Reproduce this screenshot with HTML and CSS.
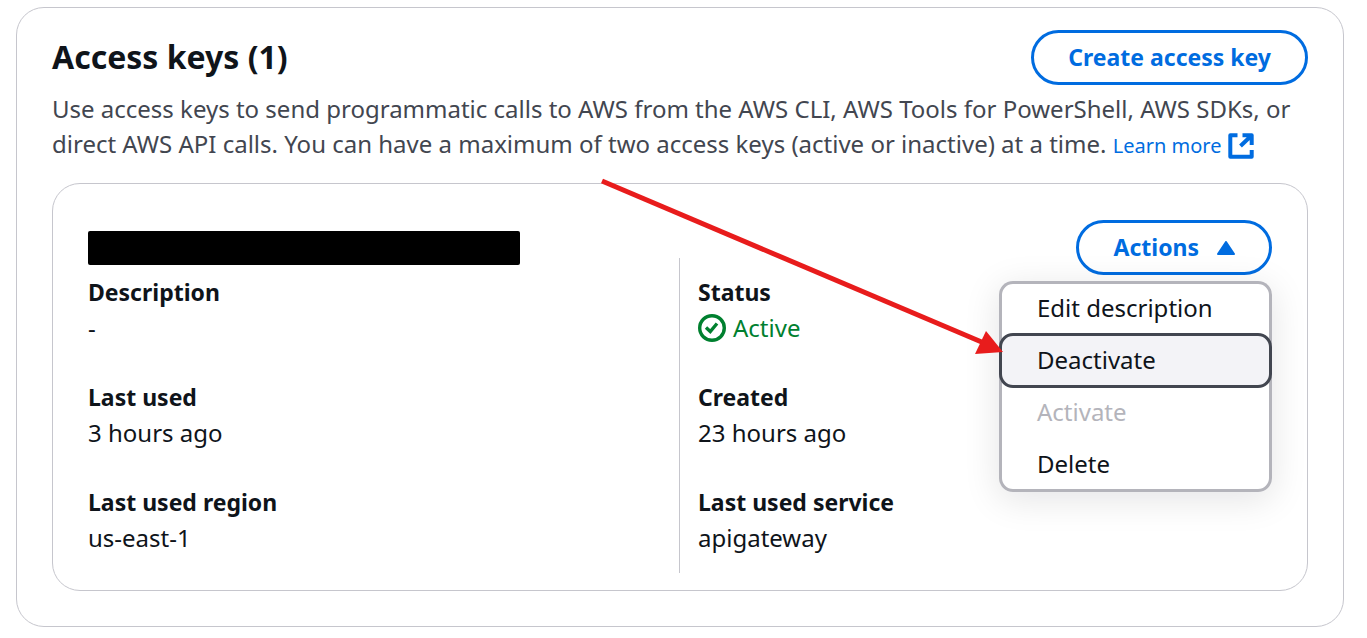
FILE: index.html
```html
<!DOCTYPE html>
<html lang="en">
<head>
<meta charset="utf-8">
<meta name="viewport" content="width=device-width, initial-scale=1">
<title>Access keys</title>
<link rel="stylesheet" href="styles.css">
</head>
<body>
<main class="panel">
  <header class="panel-header">
    <h2 class="panel-title">Access keys (1)</h2>
    <button class="button" type="button">Create access key</button>
  </header>
  <p class="panel-description">Use access keys to send programmatic calls to AWS from the AWS CLI, AWS Tools for PowerShell, AWS SDKs, or direct AWS API calls. You can have a maximum of two access keys (active or inactive) at a time. <a class="learn-more" href="#">Learn more<svg class="external-icon" viewBox="0 0 26 26" aria-hidden="true"><path d="M9.500 2.300H2.300V23.700H23.700V17M14.500 2.300H23.700V12M23 3L12.500 13" fill="none" stroke="currentColor" stroke-width="4" stroke-linejoin="round"/></svg></a></p>

  <section class="key-card">
    <div class="key-header">
      <div class="redacted"></div>
      <div class="actions">
        <button class="button" type="button" aria-haspopup="menu" aria-expanded="true">Actions <svg class="caret" viewBox="0 0 18 14" aria-hidden="true"><path d="M9 1L17 13H1Z" fill="currentColor" stroke="currentColor" stroke-width="2" stroke-linejoin="round"/></svg></button>
        <div class="menu" role="menu">
          <button class="menu-item" type="button" role="menuitem">Edit description</button>
          <button class="menu-item menu-item-active" type="button" role="menuitem">Deactivate</button>
          <button class="menu-item" type="button" role="menuitem" disabled>Activate</button>
          <button class="menu-item" type="button" role="menuitem">Delete</button>
        </div>
        <svg class="arrow" viewBox="0 0 404 180" aria-hidden="true"><path d="M2 3L384 165" stroke="#e81c1c" stroke-width="5"/><path d="M386 153L403 174L375 176Z" fill="#e81c1c"/></svg>
      </div>
    </div>
    <div class="columns">
      <dl class="column">
        <div><dt>Description</dt><dd>-</dd></div>
        <div><dt>Last used</dt><dd>3 hours ago</dd></div>
        <div><dt>Last used region</dt><dd>us-east-1</dd></div>
      </dl>
      <dl class="column">
        <div><dt>Status</dt><dd class="status"><svg class="status-icon" viewBox="0 0 28 28" aria-hidden="true"><circle cx="14" cy="14" r="12.300" fill="none" stroke="currentColor" stroke-width="3.400"/><path d="M8 13.500L12.300 17.500L19 9.500" fill="none" stroke="currentColor" stroke-width="3.400"/></svg>Active</dd></div>
        <div><dt>Created</dt><dd>23 hours ago</dd></div>
        <div><dt>Last used service</dt><dd>apigateway</dd></div>
      </dl>
    </div>
  </section>
</main>
</body>
</html>
```
FILE: styles.css
```css
* {
  box-sizing: border-box;
}

body {
  margin: 7px 23px 11px 16px;
  background: #fff;
  color: #0f141a;
  font-family: "Noto Sans", "Open Sans", sans-serif;
  font-size: 24px;
  line-height: 35px;
}

.panel {
  padding: 22px 35px 35px;
  border: 1px solid #c6c6cd;
  border-radius: 28px;
}

.panel-header {
  display: flex;
  align-items: center;
  justify-content: space-between;
}

.panel-title {
  margin: 0;
  padding-bottom: 2px;
  font-size: 32px;
  line-height: 42px;
}

.button {
  display: flex;
  align-items: center;
  justify-content: center;
  gap: 18px;
  padding: 7px 34px;
  border: 3px solid #006ce0;
  border-radius: 28px;
  background: #fff;
  color: #006ce0;
  font: inherit;
  font-size: 23px;
  font-weight: 700;
}

.panel-description {
  margin: 6px 0 22px;
  color: #424650;
}

.learn-more {
  color: #006ce0;
  font-size: 20px;
  line-height: 24px;
  text-decoration: none;
  white-space: nowrap;
}

.external-icon {
  width: 26px;
  height: 26px;
  margin-left: 7px;
  vertical-align: -6px;
}

.key-card {
  padding: 36px 35px 17px;
  border: 1px solid #c6c6cd;
  border-radius: 28px;
}

.key-header {
  display: flex;
  align-items: center;
  justify-content: space-between;
}

.redacted {
  width: 432px;
  height: 34px;
  border-radius: 2px;
  background: #000;
}

.actions {
  position: relative;
}

.caret {
  width: 18px;
  height: 14px;
}

.menu {
  position: absolute;
  z-index: 1;
  top: calc(100% + 6px);
  right: 0;
  width: 273px;
  border-radius: 14px;
  background: #fff;
  box-shadow: inset 0 0 0 3px #b4b4bb, 0 7px 35px 2px rgba(0, 7, 22, 0.1);
}

.menu-item {
  display: block;
  width: 100%;
  padding: 6px 35px 8px;
  border: 3px solid transparent;
  border-radius: 14px;
  background: none;
  color: #0f141a;
  font: inherit;
  text-align: left;
}

.menu-item + .menu-item {
  margin-top: -3px;
}

.menu-item:disabled {
  color: #b4b4bb;
}

.menu-item-active {
  border-color: #424650;
  background: #f3f3f7;
}

.arrow {
  position: absolute;
  z-index: 2;
  top: -42px;
  right: 268px;
  width: 404px;
  height: 180px;
}

.columns {
  display: grid;
  grid-template-columns: 1fr 1fr;
  margin-top: -17px;
}

.column {
  display: grid;
  gap: 35px;
  margin: 0;
  padding: 17px 0 18px;
}

.column + .column {
  margin-left: -1px;
  padding-left: 18px;
  border-left: 1px solid #c6c6cd;
}

dt {
  font-size: 23px;
  font-weight: 700;
}

dd {
  margin: 0;
}

.status {
  display: flex;
  align-items: center;
  gap: 7px;
  color: #00802f;
}

.status-icon {
  width: 28px;
  height: 28px;
}
```
